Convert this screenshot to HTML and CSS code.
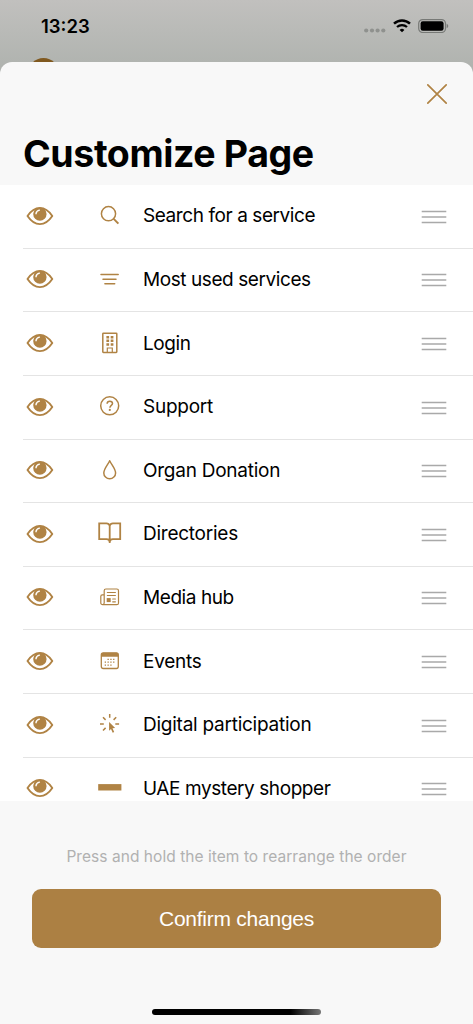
FILE: index.html
```html
<!DOCTYPE html>
<html lang="en">
<head>
  <meta charset="UTF-8">
  <title>Customize Page</title>
  <link rel="stylesheet" href="styles.css">
</head>
<body>

<!-- shared icons -->
<svg class="defs" width="0" height="0">
  <symbol id="eye" viewBox="0 0 28 20">
    <path d="M1.500 10C5 4.800 9.200 1.900 13.900 1.900S22.800 4.800 26.300 10C22.800 15.200 18.600 18.100 13.900 18.100S5 15.200 1.500 10z" fill="none" stroke="currentColor" stroke-width="1.900" stroke-linejoin="round"/>
    <circle cx="13.900" cy="8.100" r="6.700" fill="currentColor"/>
    <path d="M10 7.700A4.200 4.200 0 0 1 13.400 4.100" fill="none" stroke="#fff" stroke-width="1.400" stroke-linecap="round"/>
  </symbol>
  <symbol id="handle" viewBox="0 0 26 14">
    <path d="M.7 1.500h24.600M.7 7h24.600M.7 12.500h24.600" stroke="#a9a9a9" stroke-width="1.500"/>
  </symbol>
</svg>

<div class="status">
  <span class="time">13:23</span>
  <svg class="dots" width="22" height="5" viewBox="0 0 22 5" fill="#8f918e">
    <circle cx="2.200" cy="2.500" r="2.100"/><circle cx="8" cy="2.500" r="2.100"/><circle cx="13.600" cy="2.500" r="2.100"/><circle cx="19.300" cy="2.500" r="2.100"/>
  </svg>
  <svg class="wifi" width="18" height="14" viewBox="0 0 18 14" fill="none" stroke="#000">
    <path d="M1 4.600a11.700 11.700 0 0 1 16 0" stroke-width="2.500"/>
    <path d="M4 8a7.500 7.500 0 0 1 10 0" stroke-width="2.300"/>
    <path d="M9 13.300L6.600 10.900a3.500 3.500 0 0 1 4.800 0z" fill="#000" stroke="none"/>
  </svg>
  <svg class="battery" width="31" height="14" viewBox="0 0 31 14">
    <rect x=".7" y=".6" width="26.800" height="12.900" rx="4" fill="none" stroke="#777976" stroke-width="1.200"/>
    <rect x="2.600" y="2.300" width="23" height="9.500" rx="2.200"/>
    <path d="M28.700 4.800c2 .8 2 3.700 0 4.500z" fill="#777976"/>
  </svg>
  <span class="avatar"></span>
</div>

<div class="sheet">
  <div class="header">
    <svg class="close" width="22" height="22" viewBox="0 0 22 22">
      <path d="M1.800 1.800l18.400 18.400M20.200 1.800L1.800 20.200" stroke="currentColor" stroke-width="1.700" stroke-linecap="round"/>
    </svg>
    <h1>Customize Page</h1>
  </div>

  <div class="list">
    <div class="row">
      <svg class="eye"><use href="#eye"/></svg>
      <svg class="icon" viewBox="0.5 -0.5 30 30">
        <circle cx="14" cy="13.200" r="7.100"/><path d="M19.200 18.400l4.700 4.700" stroke-width="2"/>
      </svg>
      <span class="label tight">Search for a service</span>
      <svg class="handle"><use href="#handle"/></svg>
    </div>
    <div class="row">
      <svg class="eye"><use href="#eye"/></svg>
      <svg class="icon" viewBox="0.5 -0.5 30 30">
        <path d="M6.500 10.100h17.200M8.500 14.700h13M10.400 19.300h9.800" stroke-linecap="round"/>
      </svg>
      <span class="label tight">Most used services</span>
      <svg class="handle"><use href="#handle"/></svg>
    </div>
    <div class="row">
      <svg class="eye"><use href="#eye"/></svg>
      <svg class="icon" viewBox="0.5 0 30 30">
        <rect x="8.300" y="5.200" width="14" height="19.200" rx=".6"/>
        <path d="M11.900 9.200h2.700M16.200 9.200h2.700M11.900 12.800h2.700M16.200 12.800h2.700M11.900 16.500h2.700M16.200 16.500h2.700" stroke-width="2.600"/>
        <path d="M12.800 24v-4h5v4" stroke-width="1.200"/>
      </svg>
      <span class="label tight">Login</span>
      <svg class="handle"><use href="#handle"/></svg>
    </div>
    <div class="row">
      <svg class="eye"><use href="#eye"/></svg>
      <svg class="icon" viewBox="0.5 0 30 30">
        <circle cx="15.200" cy="14.800" r="9"/>
        <path d="M12.600 12.700c.1-1.600 1.200-2.500 2.700-2.500s2.700.9 2.700 2.300c0 1.900-2.600 1.900-2.600 4.200" stroke-width="1.500"/>
        <circle class="fill" cx="15.300" cy="18.900" r="1.100"/>
      </svg>
      <span class="label">Support</span>
      <svg class="handle"><use href="#handle"/></svg>
    </div>
    <div class="row">
      <svg class="eye"><use href="#eye"/></svg>
      <svg class="icon" viewBox="0.5 0 30 30">
        <path d="M15.200 5.700C13.500 9.500 9.300 13.700 9.300 17.900a5.900 5.900 0 0 0 11.800 0C21.100 13.700 16.900 9.500 15.200 5.700z" stroke-linejoin="round"/>
      </svg>
      <span class="label">Organ Donation</span>
      <svg class="handle"><use href="#handle"/></svg>
    </div>
    <div class="row">
      <svg class="eye"><use href="#eye"/></svg>
      <svg class="icon" viewBox="0.5 -0.5 30 30">
        <path d="M15.200 7.200C14.700 5.600 13.700 4.900 12 4.900H4.700v15.800H12c1.900 0 3 .7 3.200 2.600.2-1.900 1.300-2.600 3.200-2.600h7.300V4.900h-7.300c-1.700 0-2.700.7-3.200 2.300zM15.200 7v17.500" stroke-width="1.800"/>
      </svg>
      <span class="label">Directories</span>
      <svg class="handle"><use href="#handle"/></svg>
    </div>
    <div class="row">
      <svg class="eye"><use href="#eye"/></svg>
      <svg class="icon" viewBox="0.5 -0.5 30 30" stroke-linecap="round">
        <path d="M9.700 20.200V8.200c0-1 .7-1.700 1.700-1.700h10.900c1 0 1.700.7 1.700 1.700v12.200c0 1-.7 1.800-1.700 1.800H8.200c-1.100 0-1.900-.8-1.900-1.800v-6.500c0-.9.600-1.500 1.500-1.500h1.500M9.700 20.200c0 1.100-.5 2-1.500 2" stroke-width="1.200"/>
        <path d="M12.900 10h8M12.900 13h8M18.200 16.500h2.700M18.200 19.300h2.700" stroke-width="1.200"/>
        <rect class="fill" x="12.200" y="15.600" width="4" height="4"/>
      </svg>
      <span class="label tight">Media hub</span>
      <svg class="handle"><use href="#handle"/></svg>
    </div>
    <div class="row">
      <svg class="eye"><use href="#eye"/></svg>
      <svg class="icon" viewBox="0.5 0 30 30">
        <rect x="6.800" y="6.900" width="17" height="15.600" rx="1.900" stroke-width="1.300"/>
        <path class="fill" d="M6.800 10.800V8.500c0-1 .7-1.800 1.800-1.800H22c1.100 0 1.800.8 1.800 1.800v2.300z"/>
        <g stroke-width="1.300" stroke-dasharray="1.300 1.500">
          <path d="M13 13.300h8"/><path d="M10.200 16.200h11"/><path d="M10.200 19.100h8"/>
        </g>
      </svg>
      <span class="label">Events</span>
      <svg class="handle"><use href="#handle"/></svg>
    </div>
    <div class="row">
      <svg class="eye"><use href="#eye"/></svg>
      <svg class="icon" viewBox="0.5 0 30 30">
        <path d="M15.200 5v3.800M5.500 15h3.800M20.800 15h3.800M8.500 8.300l2.600 2.600M21.700 8.300l-2.600 2.600M8.500 21.500l2.600-2.600"/>
        <path class="fill" d="M14.600 12.900l6 6.200-2.600.2 1.700 3.700-1.500.7-1.700-3.700-1.900 1.700z"/>
      </svg>
      <span class="label">Digital participation</span>
      <svg class="handle"><use href="#handle"/></svg>
    </div>
    <div class="row">
      <svg class="eye"><use href="#eye"/></svg>
      <svg class="icon" viewBox="0.5 0 30 30">
        <rect class="fill" x="3.700" y="11.100" width="23.200" height="6.400"/>
      </svg>
      <span class="label tight">UAE mystery shopper</span>
      <svg class="handle"><use href="#handle"/></svg>
    </div>
  </div>

  <div class="footer">
    <p class="hint">Press and hold the item to rearrange the order</p>
    <button class="confirm">Confirm changes</button>
    <div class="home"></div>
  </div>
</div>

</body>
</html>
```
FILE: styles.css
```css
* {
  box-sizing: border-box;
}

body {
  margin: 0;
  height: 1024px;
  overflow: hidden;
  display: flex;
  flex-direction: column;
  font-family: Inter, "Liberation Sans", sans-serif;
  color: #000;
  background: linear-gradient(#c1c0be, #b1b4b0 62px, #adafac 80px);
}

.defs {
  position: absolute;
}

.status {
  position: relative;
  flex: none;
  height: 62px;
  padding: 0 24px 0 41px;
  display: flex;
  align-items: flex-start;
}
.time {
  flex: 1;
  padding-top: 14px;
  font-size: 18.5px;
  line-height: 24px;
  font-weight: 600;
}
.dots {
  margin: 28px 7px 0 0;
}
.wifi {
  margin: 19px 7px 0 0;
}
.battery {
  margin-top: 19px;
}
.avatar {
  position: absolute;
  left: 28px;
  top: 58px;
  width: 31px;
  height: 31px;
  border-radius: 50%;
  background: #80591f;
}

.sheet {
  position: relative;
  flex: 1;
  display: flex;
  flex-direction: column;
  background: #f8f8f8;
  border-radius: 12px 12px 0 0;
  overflow: hidden;
}
.header {
  flex: none;
  height: 123px;
  padding: 21px 25px 0 23px;
  display: flex;
  flex-direction: column;
}
.close {
  align-self: flex-end;
  color: #b08344;
}
h1 {
  margin: 25px 0 0;
  font-size: 37.5px;
  line-height: 48px;
  font-weight: 700;
  letter-spacing: -0.4px;
  white-space: nowrap;
}

.list {
  flex: none;
  height: 616px;
  padding-top: 0.3px;
  overflow: hidden;
  background: #fff;
}
.row {
  height: 63.6px;
  margin-left: 23px;
  padding: 0 26px 0 3px;
  display: flex;
  align-items: flex-start;
  color: #b08344;
  border-bottom: 1px solid #e4e4e4;
}
.eye {
  flex: none;
  width: 28px;
  height: 20px;
  margin-top: 20.6px;
}
.icon {
  flex: none;
  width: 30px;
  height: 30px;
  margin: 15.2px 18.5px 0 40.5px;
  fill: none;
  stroke: currentColor;
  stroke-width: 1.5;
}
.fill {
  fill: currentColor;
  stroke: none;
}
.label {
  flex: 1;
  padding-top: 18.2px;
  font-size: 19px;
  line-height: 25px;
  letter-spacing: -0.25px;
  white-space: nowrap;
  color: #000;
}
.tight {
  letter-spacing: -0.42px;
}
.handle {
  flex: none;
  width: 26px;
  height: 14px;
  margin-top: 24.5px;
}

.footer {
  flex: 1;
  padding: 0 32px;
  display: flex;
  flex-direction: column;
  align-items: center;
}
.hint {
  margin: 45px 0 21px;
  font-size: 15.5px;
  line-height: 22px;
  letter-spacing: 0.05px;
  white-space: nowrap;
  color: #b1b1b1;
}
.confirm {
  width: 100%;
  height: 59px;
  padding: 0;
  border: 0;
  border-radius: 9px;
  background: #ac8043;
  color: #fff;
  font-family: "Liberation Sans", Arial, sans-serif;
  font-size: 21px;
  letter-spacing: -0.25px;
}
.home {
  width: 169px;
  height: 6px;
  margin-top: 61px;
  border-radius: 3px;
  background: linear-gradient(90deg, #000 82%, #777);
}
```
